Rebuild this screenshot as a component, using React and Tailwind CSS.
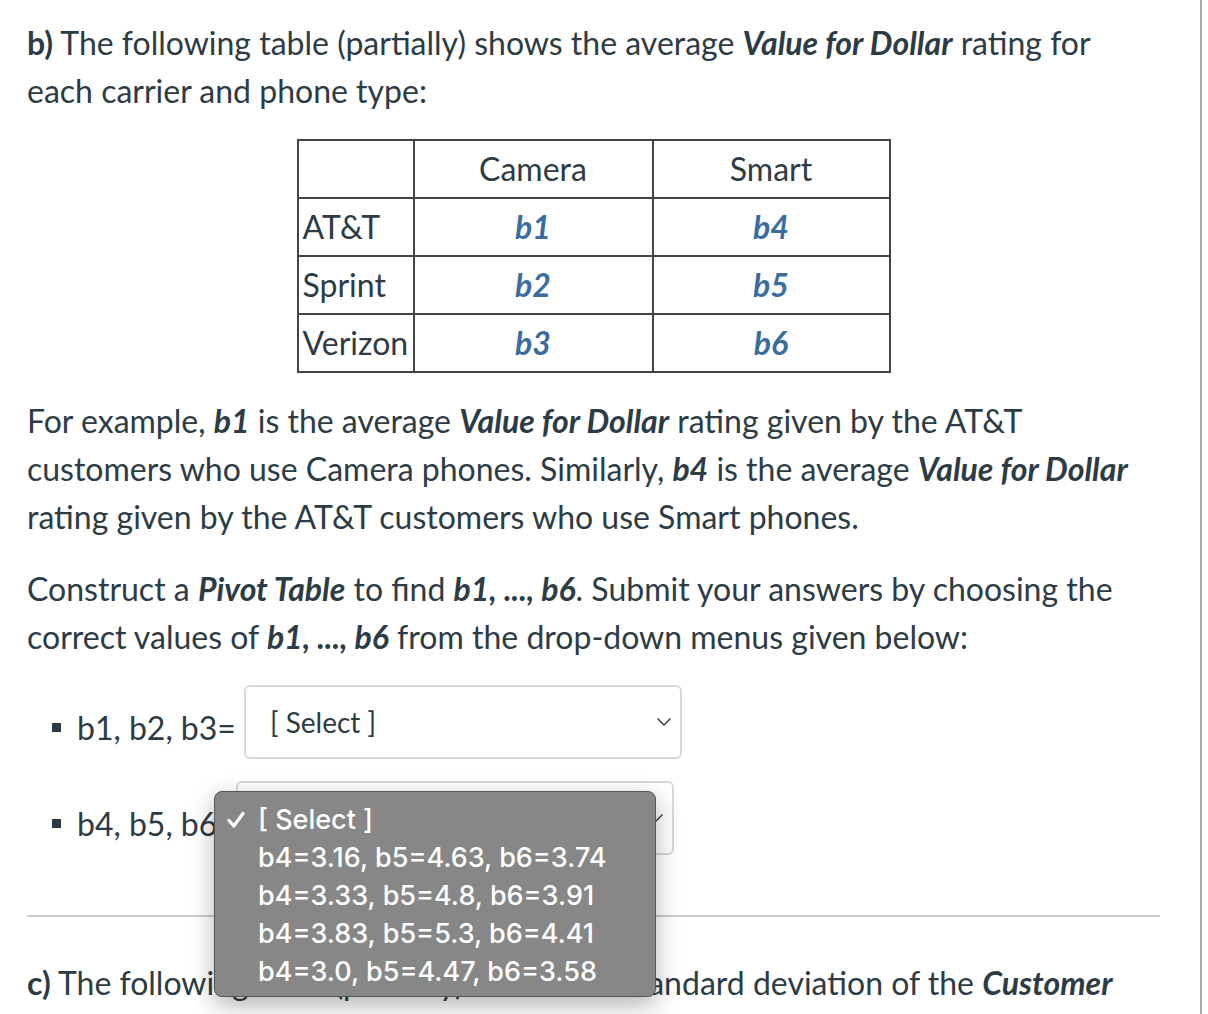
import React from "react";

const rows = [
  { carrier: "AT&T", cam: "b1", smart: "b4" },
  { carrier: "Sprint", cam: "b2", smart: "b5" },
  { carrier: "Verizon", cam: "b3", smart: "b6" },
];

const options = [
  "b4=3.16, b5=4.63, b6=3.74",
  "b4=3.33, b5=4.8, b6=3.91",
  "b4=3.83, b5=5.3, b6=4.41",
  "b4=3.0, b5=4.47, b6=3.58",
];

function Chevron() {
  return (
    <svg width="16" height="10" viewBox="0 0 16 10" className="shrink-0">
      <polyline points="1.5,1.5 8,8 14.5,1.5" fill="none" stroke="#2d3b45" strokeWidth="1.4" />
    </svg>
  );
}

function Check() {
  return (
    <svg width="18" height="18" viewBox="0 0 18 18">
      <polyline points="2,9.5 6.8,15 16,2.5" fill="none" stroke="white" strokeWidth="3.2" strokeLinecap="round" strokeLinejoin="round" />
    </svg>
  );
}

function SelectBox({ className = "" }) {
  return (
    <div
      className={`flex items-center justify-between w-[438px] h-[74px] border-2 border-[#d6d9dc] rounded-[6px] bg-white pl-[24px] pr-[8px] shrink-0 ${className}`}
    >
      <span className="text-[28px] text-[#2d3b45]">[ Select ]</span>
      <Chevron />
    </div>
  );
}

const B = ({ children }) => <strong className="font-bold italic">{children}</strong>;

export default function App() {
  return (
    <div className="flex h-[1014px] overflow-hidden bg-white" style={{ fontFamily: "Lato, 'Open Sans', sans-serif" }}>
      <div className="relative w-[1200px] pl-[27px] pr-[40px] pt-[19px] text-[#2d3b45] text-[32px] leading-[48px]">
        <p>
          <strong className="font-bold">b)</strong> The following table (partially) shows the average <B>Value for Dollar</B> rating for
          each carrier and phone type:
        </p>

        {/* table */}
        <table className="mx-auto mt-[24px] border-collapse">
          <tbody>
            <tr className="h-[58px]">
              <td className="w-[116px] border-2 border-[#444]"></td>
              <td className="w-[239px] border-2 border-[#444] text-center">Camera</td>
              <td className="w-[237px] border-2 border-[#444] text-center">Smart</td>
            </tr>
            {rows.map((r) => (
              <tr key={r.carrier} className="h-[58px]">
                <td className="border-2 border-[#444] pl-[4px]">{r.carrier}</td>
                <td className="border-2 border-[#444] text-center font-bold italic text-[#3a6d9f]">{r.cam}</td>
                <td className="border-2 border-[#444] text-center font-bold italic text-[#3a6d9f]">{r.smart}</td>
              </tr>
            ))}
          </tbody>
        </table>

        <p className="mt-[24px]">
          For example, <B>b1</B> is the average <B>Value for Dollar</B> rating given by the AT&amp;T customers who use Camera
          phones. Similarly, <B>b4</B> is the average <B>Value for Dollar</B> rating given by the AT&amp;T customers who use
          Smart phones.
        </p>

        <p className="mt-[24px]">
          Construct a <B>Pivot Table</B> to find <B>b1, ..., b6</B>. Submit your answers by choosing the correct values of{" "}
          <B>b1, ..., b6</B> from the drop-down menus given below:
        </p>

        {/* answer selects */}
        <ul className="mt-[24px] flex flex-col gap-[22px]">
          <li className="flex items-center">
            <span className="w-[9px] h-[9px] bg-[#2d3b45] ml-[25px] mr-[16px] mt-[10px] shrink-0" />
            <span className="mt-[12px] whitespace-nowrap">b1, b2, b3=</span>
            <SelectBox className="ml-[8px]" />
          </li>
          <li className="flex items-center">
            <span className="w-[9px] h-[9px] bg-[#2d3b45] ml-[25px] mr-[16px] mt-[10px] shrink-0" />
            <span className="mt-[12px] whitespace-nowrap">b4, b5, b6=</span>
            <SelectBox className="ml-0" />
          </li>
        </ul>

        <hr className="mt-[60px] border-t-2 border-[#c7cdd1]" />

        <p className="mt-[42px] whitespace-nowrap">
          <strong className="font-bold">c)</strong> The following table (partially) shows the standard deviation of the{" "}
          <B>Customer</B>
        </p>

        {/* open native dropdown menu */}
        <div
          className="absolute left-[214px] top-[791px] w-[442px] h-[206px] rounded-[8px] bg-[#878787] border border-[#555] shadow-[0_8px_24px_rgba(0,0,0,0.3)] pt-[9px] text-white text-[27px] leading-[38px] font-medium"
          style={{ fontFamily: "Inter, 'Liberation Sans', sans-serif" }}
        >
          <div className="flex items-center">
            <span className="w-[43px] pl-[12px] flex items-center">
              <Check />
            </span>
            <span>[ Select ]</span>
          </div>
          {options.map((o) => (
            <div key={o} className="pl-[43px] whitespace-nowrap">
              {o}
            </div>
          ))}
        </div>
      </div>
      <div className="w-[2px] bg-[#a9a9a9]" />
    </div>
  );
}
